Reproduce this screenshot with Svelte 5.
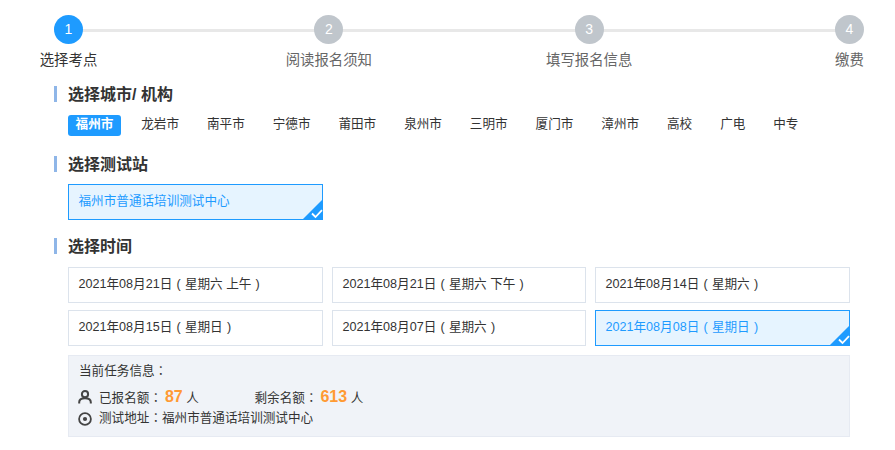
<script>
  const STEPS = ['选择考点', '阅读报名须知', '填写报名信息', '缴费'];
  const CITIES = ['福州市', '龙岩市', '南平市', '宁德市', '莆田市', '泉州市', '三明市', '厦门市', '漳州市', '高校', '广电', '中专'];
  const TIMES = [
    { date: '2021年08月21日', week: '星期六 上午' },
    { date: '2021年08月21日', week: '星期六 下午' },
    { date: '2021年08月14日', week: '星期六' },
    { date: '2021年08月15日', week: '星期日' },
    { date: '2021年08月07日', week: '星期六' },
    { date: '2021年08月08日', week: '星期日' },
  ];

  let step = 0;
  let city = '福州市';
  let time = 5;
</script>

<div class="page">
  <div class="steps">
    {#each STEPS as s, i}
      <div class="step" class:current={i === step}>
        <span class="num">{i + 1}</span>
        <span class="label">{s}</span>
      </div>
    {/each}
  </div>

  <h3 class="first">选择城市/ 机构</h3>
  <div class="cities">
    {#each CITIES as c}
      <button class="city" class:active={c === city} on:click={() => (city = c)}>{c}</button>
    {/each}
  </div>

  <h3 class="second">选择测试站</h3>
  <div class="grid">
    <div class="card selected">
      福州市普通话培训测试中心
      <svg class="tick" width="21" height="21" viewBox="0 0 21 21">
        <path d="M21 0V21H0Z" fill="#1e9bff" />
        <path d="M10 14.5l3.5 3.5 6.5-6.8" fill="none" stroke="#fff" stroke-width="1.8" />
      </svg>
    </div>
  </div>

  <h3 class="third">选择时间</h3>
  <div class="grid">
    {#each TIMES as t, i}
      <button class="card" class:selected={i === time} on:click={() => (time = i)}>
        {t.date}<span class="paren">(</span>{t.week}<span class="paren">)</span>
        {#if i === time}
          <svg class="tick" width="21" height="21" viewBox="0 0 21 21">
            <path d="M21 0V21H0Z" fill="#1e9bff" />
            <path d="M10 14.5l3.5 3.5 6.5-6.8" fill="none" stroke="#fff" stroke-width="1.8" />
          </svg>
        {/if}
      </button>
    {/each}
  </div>

  <div class="info">
    <p class="info-title">当前任务信息<span class="colon">：</span></p>
    <div class="info-row">
      <svg width="14" height="14" viewBox="0 0 14 14">
        <circle cx="7" cy="4.2" r="3.1" fill="none" stroke="#444" stroke-width="2" />
        <path d="M1.2 13.5V12.2c0-2.6 2.2-4 5.800-4s5.800 1.400 5.800 4v1.300" fill="none" stroke="#444" stroke-width="2" />
      </svg>
      <span class="count">已报名额<span class="colon">：</span><b>87</b> 人</span>
      <span>剩余名额<span class="colon">：</span><b>613</b> 人</span>
    </div>
    <div class="info-row addr">
      <svg width="14" height="14" viewBox="0 0 14 14">
        <circle cx="7" cy="7" r="5.9" fill="none" stroke="#444" stroke-width="1.8" />
        <circle cx="7" cy="7" r="2.1" fill="#444" />
      </svg>
      <span>测试地址<span class="colon">：</span>福州市普通话培训测试中心</span>
    </div>
  </div>
</div>

<style>
  :global(body) { background: #fff; }

  .page { width: 895px; height: 450px; box-sizing: border-box; padding: 15px 45px 0 54px; overflow: hidden; font-family: "Liberation Sans", "Noto Sans CJK SC", sans-serif; font-size: 12.6px; color: #333; }

  .steps { position: relative; display: flex; justify-content: space-between; width: 810px; }
  .steps::before { content: ''; position: absolute; left: 14px; right: 14px; top: 14px; height: 3px; background: #e8e8e8; }
  .step { position: relative; width: 29px; display: flex; flex-direction: column; align-items: center; }
  .num { width: 29px; height: 29px; border-radius: 50%; background: #c0c6cc; color: #fff; font-size: 14px; line-height: 29px; text-align: center; }
  .label { margin-top: 6px; font-size: 14.4px; line-height: 20px; white-space: nowrap; color: #666; }
  .current .num { background: #1e9bff; }
  .current .label { color: #333; }

  h3 { height: 16px; margin: 0; padding-left: 11px; border-left: 3px solid #8fb6e8; font-size: 16px; line-height: 18px; font-weight: 700; color: #333; }
  h3.first { margin-top: 16px; }
  h3.second { margin-top: 20px; }
  h3.third { margin-top: 18px; }

  .cities { display: flex; gap: 12.85px; margin: 13px 0 0 14px; }
  .city { padding: 0 .6em 2px; height: 21px; border: 0; border-radius: 3px; background: none; font: inherit; line-height: 19px; color: #333; cursor: pointer; }
  .city.active { background: #1e9bff; color: #fff; font-weight: 700; }

  .grid { display: grid; grid-template-columns: 255px 254px 255px; gap: 7px 9px; margin: 12px 0 0 14px; }
  .third + .grid { margin-top: 13px; }
  .card { position: relative; height: 36px; box-sizing: border-box; padding: 0 9.5px 2px; border: 1px solid #dce3ec; background: #fff; font: inherit; line-height: 32px; text-align: left; color: #333; cursor: pointer; }
  .card.selected { border-color: #1e9bff; background: #e6f4ff; color: #1e9bff; }
  .tick { position: absolute; right: -1px; bottom: -1px; }
  .paren { display: inline-block; width: 1em; text-align: center; }
  .colon { font-family: "Noto Sans CJK TC", sans-serif; }

  .info { margin: 9px 0 0 14px; width: 782px; height: 82px; box-sizing: border-box; padding: 4px 10px; border: 1px solid #e6eaf2; background: #f0f3f8; }
  .info-title { margin: 0; line-height: 20px; }
  .info-row { display: flex; align-items: center; gap: 7px; height: 22px; margin-top: 5px; }
  .info-row svg { flex: none; margin-left: -1px; }
  .info-row span:not(.colon) { margin-bottom: 2px; }
  .addr { margin-top: 0; }
  .addr span:not(.colon) { margin-bottom: 5px; }
  .count { width: 148.5px; }
  b { margin-left: 3px; font-size: 16px; color: #ff9a33; }
</style>
